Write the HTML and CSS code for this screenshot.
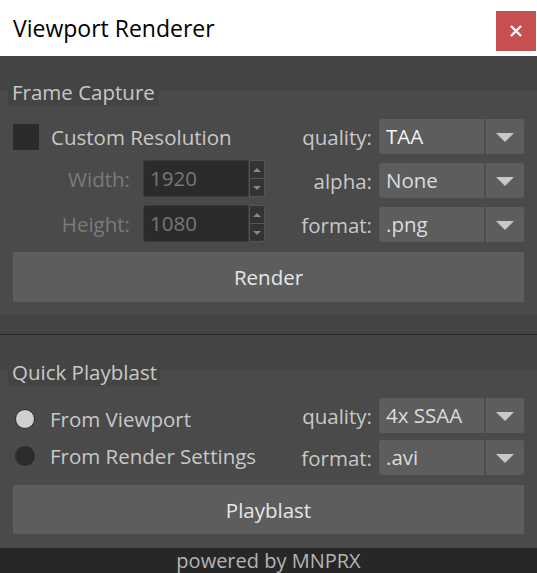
FILE: index.html
```html
<!DOCTYPE html>
<html>
<head>
<meta charset="utf-8">
<title>Viewport Renderer</title>
<link rel="stylesheet" href="styles.css">
</head>
<body>
<div class="window">
  <header class="titlebar">
    <span class="title">Viewport Renderer</span>
    <button class="close" aria-label="Close"><svg width="14" height="12" viewBox="0 0 14 12"><path d="M2 1 L12 11 M12 1 L2 11" stroke="#fff" stroke-width="2.4" fill="none"/></svg></button>
  </header>
  <main class="content">
    <section class="group group-first">
      <div class="group-title">Frame Capture</div>
      <div class="group-body">
        <div class="cols">
          <div class="left">
            <div class="check-row"><span class="checkbox"></span><span class="check-label">Custom Resolution</span></div>
            <div class="field-row field-first">
              <span class="field-label">Width:</span>
              <div class="spin"><span class="spin-value">1920</span><span class="spin-btns"><span class="spin-btn"><span class="tri-up"></span></span><span class="spin-btn"><span class="tri-down"></span></span></span></div>
            </div>
            <div class="field-row field-second">
              <span class="field-label">Height:</span>
              <div class="spin"><span class="spin-value">1080</span><span class="spin-btns"><span class="spin-btn"><span class="tri-up"></span></span><span class="spin-btn"><span class="tri-down"></span></span></span></div>
            </div>
          </div>
          <div class="right right-a">
            <div class="opt-row"><span class="opt-label">quality:</span><div class="dropdown"><span class="dd-value bright">TAA</span><span class="dd-arrow"><span class="tri"></span></span></div></div>
            <div class="opt-row"><span class="opt-label">alpha:</span><div class="dropdown"><span class="dd-value">None</span><span class="dd-arrow"><span class="tri"></span></span></div></div>
            <div class="opt-row"><span class="opt-label">format:</span><div class="dropdown"><span class="dd-value">.png</span><span class="dd-arrow"><span class="tri"></span></span></div></div>
          </div>
        </div>
        <button class="action action-render">Render</button>
      </div>
    </section>
    <div class="separator"></div>
    <section class="group group-second">
      <div class="group-title title-second">Quick Playblast</div>
      <div class="group-body body-second">
        <div class="cols">
          <div class="left radios">
            <div class="radio-row"><span class="radio radio-on"></span><span class="radio-label">From Viewport</span></div>
            <div class="radio-row"><span class="radio"></span><span class="radio-label">From Render Settings</span></div>
          </div>
          <div class="right right-b">
            <div class="opt-row"><span class="opt-label">quality:</span><div class="dropdown"><span class="dd-value">4x SSAA</span><span class="dd-arrow"><span class="tri"></span></span></div></div>
            <div class="opt-row"><span class="opt-label">format:</span><div class="dropdown"><span class="dd-value">.avi</span><span class="dd-arrow"><span class="tri"></span></span></div></div>
          </div>
        </div>
        <button class="action action-playblast">Playblast</button>
      </div>
    </section>
  </main>
  <footer class="footer">powered by MNPRX</footer>
</div>
</body>
</html>
```

FILE: styles.css
```css
* { box-sizing: border-box; }
html, body { margin: 0; padding: 0; }
body {
  width: 537px;
  height: 573px;
  overflow: hidden;
  background: #444444;
  font-family: "Open Sans", "Noto Sans", "DejaVu Sans", sans-serif;
}
.window { display: flex; flex-direction: column; height: 573px; }

.titlebar {
  height: 56px;
  background: #ffffff;
  display: flex;
  align-items: flex-start;
  justify-content: space-between;
  flex: none;
}
.title {
  font-size: 23px;
  line-height: 30px;
  color: #000;
  margin: 13px 0 0 13px;
}
.close {
  width: 40px;
  height: 40px;
  margin: 11px 1px 0 0;
  border: 0;
  padding: 0;
  background: #c75050;
  display: flex;
  align-items: center;
  justify-content: center;
}

.content { flex: 1; background: #444444; display: flex; flex-direction: column; }

.group {
  display: flex;
  flex-direction: column;
  background: #4a4a4a;
  margin-top: 35px;
}
.group-title {
  width: fit-content;
  margin: -13px 0 0 8px;
  padding: 0 3px 0 4px;
  height: 28px;
  line-height: 28px;
  font-size: 20.5px;
  color: #c8c8c8;
  background: #444444;
}
.title-second { margin-top: -12px; }

.group-body { padding: 13px 13px 13px 13px; }
.body-second { padding: 12px 13px 14px 13px; }

.cols { display: flex; justify-content: space-between; align-items: flex-start; }
.left { display: flex; flex-direction: column; }
.right { display: flex; flex-direction: column; }
.right-a { gap: 9px; }
.right-b { gap: 7px; }

.check-row { height: 35px; display: flex; align-items: center; gap: 12px; }
.checkbox { width: 26px; height: 26px; background: #2b2b2b; border-radius: 1px; }
.check-label { font-size: 20.5px; color: #c8c8c8; }

.field-row { display: flex; align-items: center; height: 37px; }
.field-first { margin-top: 6px; }
.field-second { margin-top: 8px; }
.field-label {
  width: 117px;
  text-align: right;
  font-size: 20.5px;
  color: #7a7a7a;
  margin-right: 13px;
}
.spin { display: flex; height: 37px; }
.spin-value {
  width: 106px;
  height: 37px;
  background: #2b2b2b;
  border: 1px solid #3a3a3a;
  border-radius: 3px 0 0 3px;
  font-size: 20.5px;
  line-height: 34px;
  color: #777777;
  padding-left: 6px;
}
.spin-btns { display: flex; flex-direction: column; width: 16px; }
.spin-btn {
  flex: 1;
  background: #333333;
  border: 1px solid #555555;
  display: flex;
  align-items: center;
  justify-content: center;
}
.spin-btn + .spin-btn { border-top: 0; }
.spin-btn:first-child { border-radius: 0 3px 0 0; }
.spin-btn:last-child { border-radius: 0 0 3px 0; }
.tri-up { width: 0; height: 0; border-left: 4px solid transparent; border-right: 4px solid transparent; border-bottom: 4px solid #888; }
.tri-down { width: 0; height: 0; border-left: 4px solid transparent; border-right: 4px solid transparent; border-top: 4px solid #888; }

.opt-row { display: flex; align-items: center; }
.opt-label {
  width: 100px;
  text-align: right;
  font-size: 20.5px;
  color: #c8c8c8;
  margin-right: 7px;
}
.dropdown {
  width: 145px;
  height: 35px;
  background: #5d5d5d;
  border-radius: 3px;
  display: flex;
}
.dd-value {
  flex: 1;
  font-size: 20.5px;
  line-height: 34px;
  color: #dcdcdc;
  padding-left: 7px;
  border-right: 2px solid #4e4e4e;
}
.dd-value.bright { color: #f4f4f4; }
.dd-arrow { width: 38px; display: flex; align-items: center; justify-content: center; }
.tri { width: 0; height: 0; border-left: 9px solid transparent; border-right: 9px solid transparent; border-top: 9px solid #c8c8c8; margin-top: 1px; }

.action {
  display: block;
  width: 100%;
  margin-top: 10px;
  height: 50px;
  border: 0;
  background: #5d5d5d;
  color: #e6e6e6;
  font-family: inherit;
  font-size: 20.5px;
  padding: 0;
}
.action-playblast { height: 49px; }

.separator { height: 1px; background: #2a2a2a; margin-top: 19px; }

.radios { padding-top: 3px; gap: 2px; }
.radio-row { height: 35px; display: flex; align-items: center; gap: 15px; padding-left: 2px; }
.radio { width: 20px; height: 20px; border-radius: 50%; background: #2b2b2b; }
.radio-on { background: #cfcfcf; border: 1px solid #2b2b2b; }
.radio-label { font-size: 20.5px; color: #c8c8c8; }

.footer {
  height: 25px;
  flex: none;
  background: #272727;
  color: #b4b4b4;
  font-size: 20px;
  line-height: 25px;
  text-align: center;
  overflow: hidden;
}
```
